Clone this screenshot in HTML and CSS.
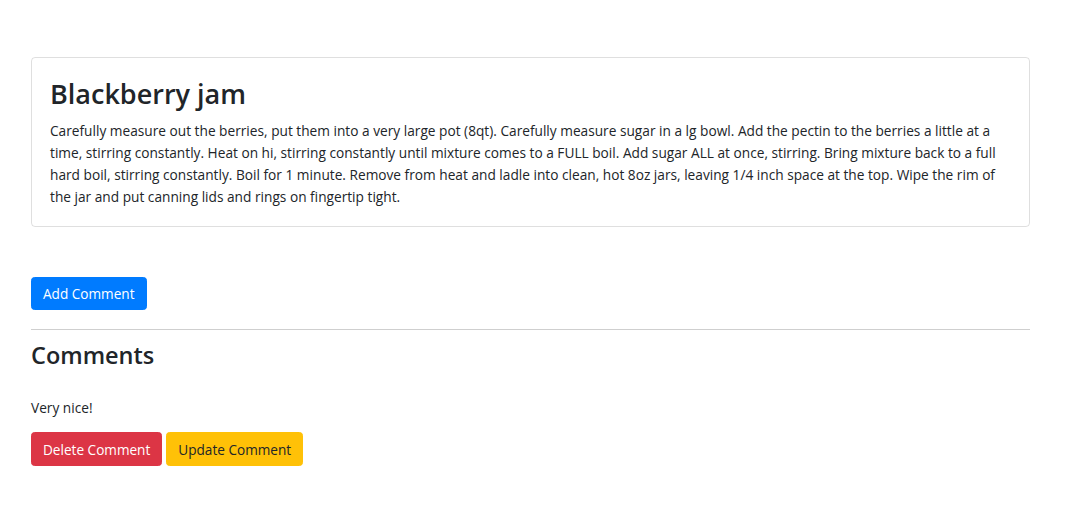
FILE: index.html
```html
<!DOCTYPE html>
<html>
<head>
<meta charset="utf-8">
<link rel="stylesheet" href="styles.css">
</head>
<body>
<div class="page">
  <div class="card">
    <h2 class="card-title">Blackberry jam</h2>
    <p class="card-text">Carefully measure out the berries, put them into a very large pot (8qt). Carefully measure sugar in a lg bowl. Add the pectin to the berries a little at a time, stirring constantly. Heat on hi, stirring constantly until mixture comes to a FULL boil. Add sugar ALL at once, stirring. Bring mixture back to a full hard boil, stirring constantly. Boil for 1 minute. Remove from heat and ladle into clean, hot 8oz jars, leaving 1/4 inch space at the top. Wipe the rim of the jar and put canning lids and rings on fingertip tight.</p>
  </div>
  <div class="actions">
    <button class="btn btn-primary">Add Comment</button>
  </div>
  <hr class="divider">
  <h3 class="comments-title">Comments</h3>
  <div class="comment">
    <p class="comment-text">Very nice!</p>
    <div class="comment-buttons">
      <button class="btn btn-danger">Delete Comment</button>
      <button class="btn btn-warning">Update Comment</button>
    </div>
  </div>
</div>
</body>
</html>
```

FILE: styles.css
```css
html { font-size: 14px; }
* { box-sizing: border-box; }
body {
  margin: 0;
  font-family: "Open Sans", "Noto Sans", sans-serif;
  font-size: 14px;
  line-height: 1.5;
  color: #212529;
  background: #fff;
}
.page {
  padding: 57px 39px 0 31px;
}
.card {
  border: 1px solid rgba(0,0,0,.125);
  border-radius: 4px;
  padding: 20px 18px 18px 18px;
}
.card-title {
  margin: 0 0 10px 0;
  font-size: 27px;
  font-weight: 600;
  line-height: 1.2;
}
.card-text {
  margin: 0;
  font-size: 13.7px;
  line-height: 22px;
}
.actions {
  margin-top: 50px;
}
.btn {
  display: inline-block;
  font-family: inherit;
  font-size: 13.6px;
  line-height: 21px;
  padding: 5px 11px;
  border: 1px solid transparent;
  border-radius: 3.5px;
  cursor: pointer;
}
.btn-primary { background: #007bff; border-color: #007bff; color: #fff; }
.btn-danger { background: #dc3545; border-color: #dc3545; color: #fff; }
.btn-warning { background: #ffc107; border-color: #ffc107; color: #212529; }
.divider {
  margin: 19px 0 0 0;
  border: 0;
  border-top: 1px solid #cfcfcf;
}
.comments-title {
  margin: 11px 0 0 0;
  font-size: 23.5px;
  font-weight: 600;
  line-height: 1.2;
}
.comment-text {
  margin: 28px 0 0 0;
  font-size: 13.7px;
}
.comment-buttons {
  display: flex;
  gap: 4px;
  margin-top: 14px;
}
.comment-buttons .btn { height: 34px; }
```
